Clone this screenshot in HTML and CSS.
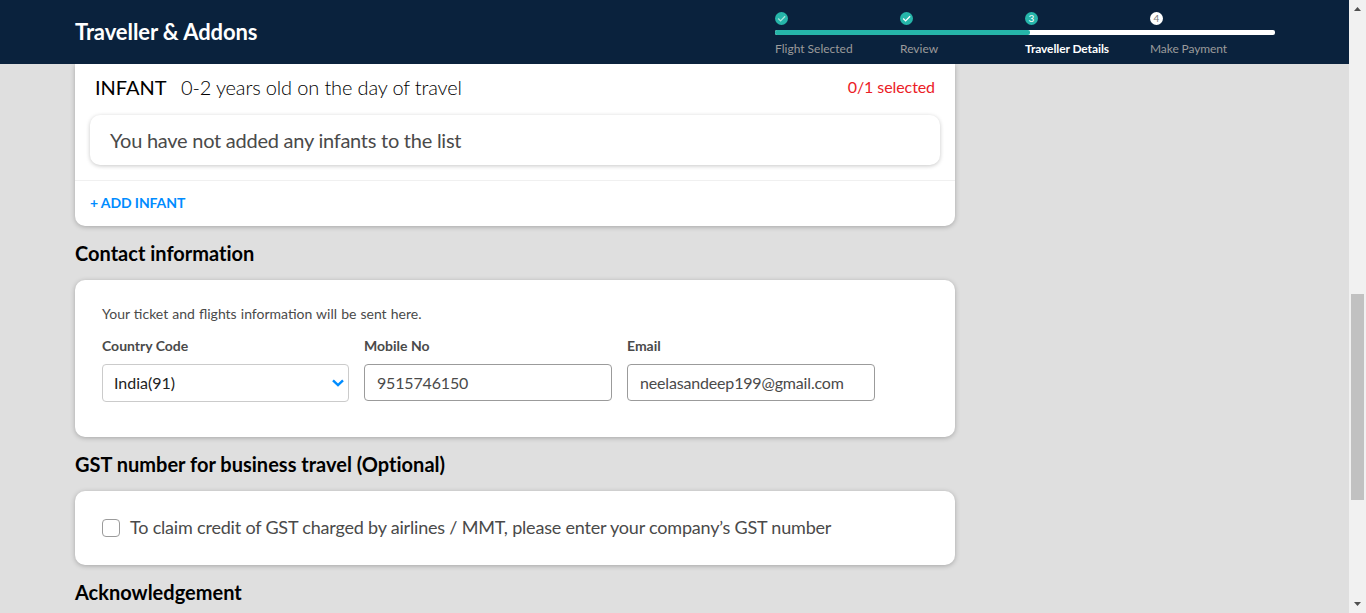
FILE: index.html
```html
<!DOCTYPE html>
<html lang="en">
<head>
<meta charset="utf-8">
<title>Traveller &amp; Addons</title>
<link rel="stylesheet" href="styles.css">
</head>
<body>
<div class="window">
  <div class="page">
    <header class="header">
      <h1 class="header-title">Traveller &amp; Addons</h1>
      <div class="progress">
        <div class="markers">
          <span class="marker done"><svg width="13" height="13" viewBox="0 0 13 13"><path d="M3.2 6.5l2.4 2.4 4.5-4.7" fill="none" stroke="#a9e5dd" stroke-width="1.3"/></svg></span>
          <span class="marker done"><svg width="13" height="13" viewBox="0 0 13 13"><path d="M3.2 6.5l2.4 2.4 4.5-4.7" fill="none" stroke="#fff" stroke-width="1.3"/></svg></span>
          <span class="marker done">3</span>
          <span class="marker pending">4</span>
        </div>
        <div class="bar"><div class="bar-fill"></div></div>
        <div class="steps">
          <span>Flight Selected</span>
          <span>Review</span>
          <span class="current">Traveller Details</span>
          <span class="upcoming">Make Payment</span>
        </div>
      </div>
    </header>
    <main class="content">
      <section class="card infant-card">
        <div class="infant-head">
          <span class="infant-label">INFANT</span>
          <span class="infant-note">0-2 years old on the day of travel</span>
          <span class="infant-count">0/1 selected</span>
        </div>
        <div class="empty-list">You have not added any infants to the list</div>
        <div class="add-row"><a class="add-link">+ ADD INFANT</a></div>
      </section>

      <h2 class="section-title">Contact information</h2>
      <section class="card contact-card">
        <p class="contact-note">Your ticket and flights information will be sent here.</p>
        <div class="fields">
          <div class="field">
            <label class="label">Country Code</label>
            <div class="control select"><span>India(91)</span>
              <svg width="14" height="10" viewBox="0 0 14 10"><path d="M2 2.3l5 4.8 5-4.8" fill="none" stroke="#008cff" stroke-width="2.4"/></svg>
            </div>
          </div>
          <div class="field">
            <label class="label">Mobile No</label>
            <div class="control">9515746150</div>
          </div>
          <div class="field">
            <label class="label">Email</label>
            <div class="control">neelasandeep199@gmail.com</div>
          </div>
        </div>
      </section>

      <h2 class="section-title">GST number for business travel (Optional)</h2>
      <section class="card gst-card">
        <span class="checkbox"></span>
        <span class="gst-text">To claim credit of GST charged by airlines / MMT, please enter your company’s GST number</span>
      </section>

      <h2 class="section-title">Acknowledgement</h2>
      <section class="card ack-card"></section>
    </main>
  </div>
  <div class="scrollbar">
    <svg class="arrow" width="17" height="17" viewBox="0 0 17 17"><path d="M5 11h7L8.5 7z" fill="#505050"/></svg>
    <div class="thumb"></div>
    <svg class="arrow" width="17" height="17" viewBox="0 0 17 17"><path d="M5 6h7L8.5 10z" fill="#505050"/></svg>
  </div>
</div>
</body>
</html>
```
FILE: styles.css
```css
* { box-sizing: border-box; }
body { margin: 0; font-family: Lato, "Open Sans", sans-serif; color: #4a4a4a; overflow: hidden; }
h1, h2, p { margin: 0; }
.window { display: flex; width: 1366px; height: 613px; overflow: hidden; background: #dfdfdf; }
.page { width: 1349px; height: 613px; overflow: hidden; }
.header { display: flex; justify-content: space-between; height: 64px; padding: 0 74px 0 75px; background: #0a223d; color: #fff; }
.header-title { font-size: 22px; font-weight: 700; line-height: 64px; letter-spacing: -0.09px; white-space: nowrap; }
.progress { width: 500px; padding-top: 12px; }
.markers, .steps { display: grid; grid-template-columns: repeat(4, 125px); }
.marker { display: flex; align-items: center; justify-content: center; width: 13px; height: 13px; border-radius: 50%; font-size: 10px; line-height: 13px; }
.done { background: #26b5a9; }
.pending { background: #fff; color: #777; }
.bar { height: 5px; margin-top: 5px; background: #fff; border-radius: 2px; }
.bar-fill { width: 255px; height: 5px; background: #26b5a9; border-radius: 2px; }
.steps { margin-top: 6px; font-size: 12px; line-height: 16px; color: #9b9b9b; white-space: nowrap; }
.current { color: #fff; font-weight: 700; letter-spacing: -0.1px; }
.upcoming { letter-spacing: -0.1px; }

.content { width: 955px; padding-left: 75px; }
.card { background: #fff; border-radius: 10px; box-shadow: 0 1px 5px rgba(0, 0, 0, .26); }
.infant-card { height: 162px; border-radius: 0 0 10px 10px; clip-path: inset(0 -10px -10px -10px); }
.infant-head { display: flex; height: 51px; padding: 0 20px; line-height: 46px; white-space: nowrap; }
.infant-label { width: 86px; font-size: 20px; color: #000; }
.infant-note { font-size: 20px; font-weight: 300; letter-spacing: -0.15px; color: #000; }
.infant-count { margin-left: auto; font-size: 16px; line-height: 45px; letter-spacing: -0.08px; color: #eb2026; }
.empty-list { height: 50px; margin: 0 15px; padding-left: 20px; border-radius: 10px; box-shadow: 0 1px 4px rgba(0, 0, 0, .22); font-size: 20px; line-height: 50px; letter-spacing: -0.25px; }
.add-row { height: 46px; margin-top: 15px; padding-left: 15px; border-top: 1px solid #f0f0f0; line-height: 41px; }
.add-link { color: #008cff; font-size: 14px; font-weight: 700; letter-spacing: -0.1px; }
.section-title { height: 54px; font-size: 20px; font-weight: 700; line-height: 54px; letter-spacing: 0.005px; color: #000; white-space: nowrap; }
.contact-card { height: 157px; padding: 24px 27px; }
.contact-note { font-size: 14px; line-height: 20px; word-spacing: 0.5px; }
.fields { display: grid; grid-template-columns: 247px 248px 248px; column-gap: 15px; margin-top: 12px; }
.label { display: block; height: 28px; font-size: 14px; font-weight: 700; line-height: 20px; }
.control { display: flex; align-items: center; justify-content: space-between; height: 37px; padding: 0 12px; border: 1px solid #9b9b9b; border-radius: 4px; font-size: 16px; letter-spacing: -0.17px; }
.select { height: 38px; padding: 0 3px 1px 11px; border-color: #cbcbcb; color: #222; letter-spacing: 0; }
.gst-card { display: flex; align-items: center; gap: 10px; height: 74px; padding: 0 27px; }
.checkbox { width: 18px; height: 18px; border: 1px solid #9b9b9b; border-radius: 4px; }
.gst-text { padding-bottom: 2px; font-size: 18px; letter-spacing: -0.195px; white-space: nowrap; }
.ack-card { height: 80px; }

.scrollbar { display: flex; flex-direction: column; width: 17px; background: #f1f1f1; }
.arrow { display: block; }
.thumb { width: 13px; height: 206px; margin: 277px 0 auto 2px; background: #c1c1c1; }
```
